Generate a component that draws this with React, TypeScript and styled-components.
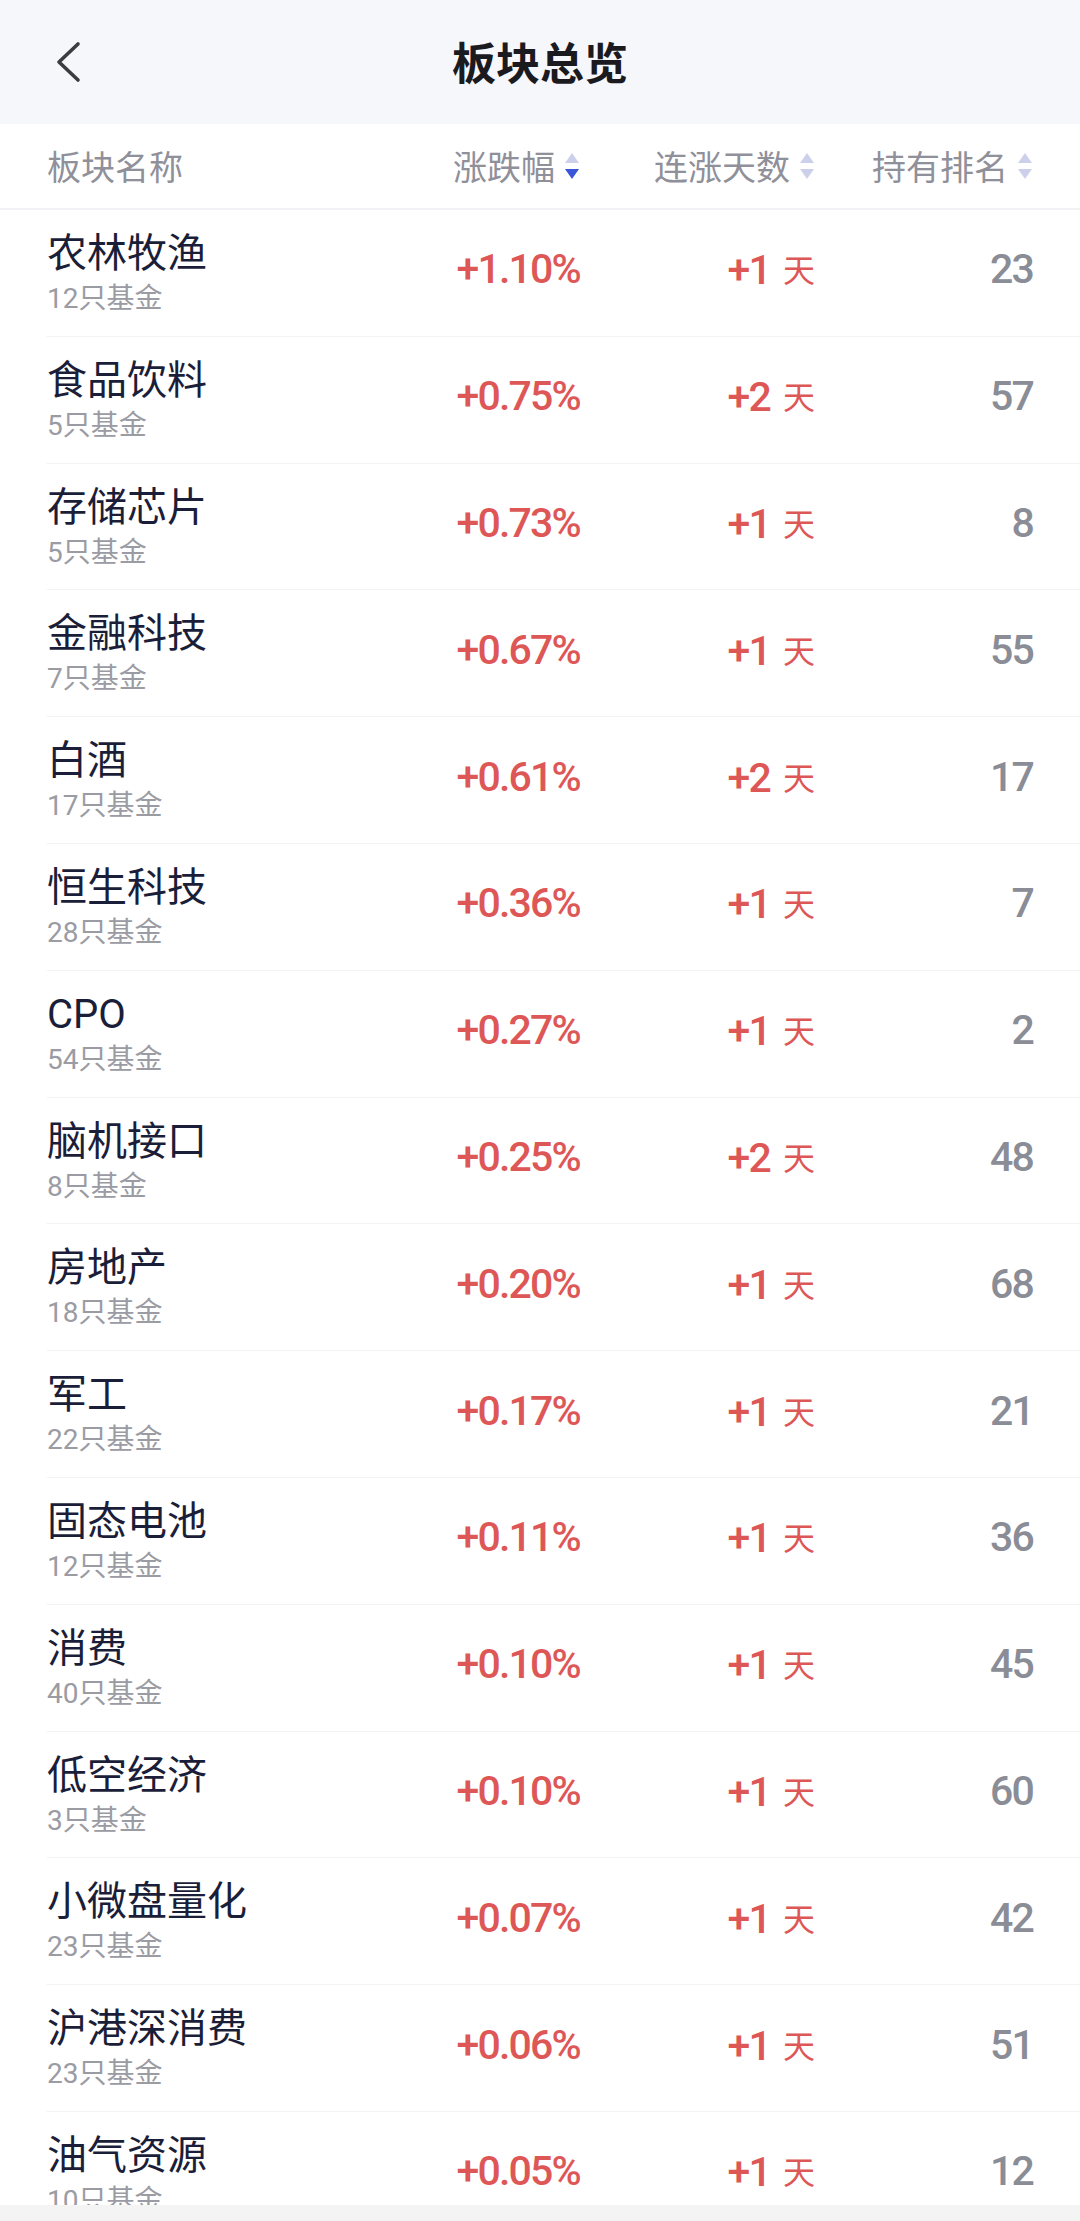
import React from "react";
import styled, { createGlobalStyle } from "styled-components";

const GlobalStyle = createGlobalStyle`
  html, body { margin: 0; padding: 0; background: #ffffff; }
  body { font-family: Roboto, "Noto Sans CJK SC", sans-serif; -webkit-font-smoothing: antialiased; }
  * { box-sizing: border-box; }
`;

type Sector = { name: string; funds: number; pct: string; days: number; rank: number };

const DATA: Sector[] = [
  { name: "农林牧渔", funds: 12, pct: "+1.10%", days: 1, rank: 23 },
  { name: "食品饮料", funds: 5, pct: "+0.75%", days: 2, rank: 57 },
  { name: "存储芯片", funds: 5, pct: "+0.73%", days: 1, rank: 8 },
  { name: "金融科技", funds: 7, pct: "+0.67%", days: 1, rank: 55 },
  { name: "白酒", funds: 17, pct: "+0.61%", days: 2, rank: 17 },
  { name: "恒生科技", funds: 28, pct: "+0.36%", days: 1, rank: 7 },
  { name: "CPO", funds: 54, pct: "+0.27%", days: 1, rank: 2 },
  { name: "脑机接口", funds: 8, pct: "+0.25%", days: 2, rank: 48 },
  { name: "房地产", funds: 18, pct: "+0.20%", days: 1, rank: 68 },
  { name: "军工", funds: 22, pct: "+0.17%", days: 1, rank: 21 },
  { name: "固态电池", funds: 12, pct: "+0.11%", days: 1, rank: 36 },
  { name: "消费", funds: 40, pct: "+0.10%", days: 1, rank: 45 },
  { name: "低空经济", funds: 3, pct: "+0.10%", days: 1, rank: 60 },
  { name: "小微盘量化", funds: 23, pct: "+0.07%", days: 1, rank: 42 },
  { name: "沪港深消费", funds: 23, pct: "+0.06%", days: 1, rank: 51 },
  { name: "油气资源", funds: 10, pct: "+0.05%", days: 1, rank: 12 },
];

const Page = styled.div`
  width: 1080px;
  height: 2221px;
  display: flex;
  flex-direction: column;
  background: #ffffff;
  overflow: hidden;
`;

const TopBar = styled.header`
  flex: 0 0 124px;
  height: 124px;
  background: #f6f7fb;
  display: grid;
  grid-template-columns: 140px 1fr 140px;
  align-items: center;
`;

const BackButton = styled.button`
  border: 0;
  background: transparent;
  padding: 0 0 0 54px;
  height: 124px;
  display: flex;
  align-items: center;
  justify-content: flex-start;
  cursor: pointer;
`;

const Title = styled.h1`
  margin: 0;
  text-align: center;
  font-family: "Noto Sans CJK SC", sans-serif;
  font-size: 44px;
  font-weight: 700;
  color: #1a1a1f;
  line-height: 60px;
  padding-bottom: 2px;
`;

const Grid = styled.div`
  display: grid;
  grid-template-columns: 298px 235px 235px 218px;
`;

const HeadRow = styled(Grid)`
  flex: 0 0 86px;
  height: 86px;
  padding: 0 45px 0 47px;
  align-items: center;
  border-bottom: 2px solid #f1f2f5;
`;

const HeadCell = styled.div<{ $right?: boolean }>`
  display: flex;
  align-items: center;
  justify-content: ${(p) => (p.$right ? "flex-end" : "flex-start")};
  gap: 9px;
  font-family: "Noto Sans CJK SC", sans-serif;
  font-size: 34px;
  color: #8f9099;
  line-height: 40px;
`;

const List = styled.div`
  flex: 1 1 auto;
  overflow: hidden;
  padding-left: 47px;
`;

const Row = styled(Grid)`
  height: 126.8px;
  padding-right: 47px;
  align-items: center;
  border-bottom: 1px solid #f2f3f5;
`;

const NameCell = styled.div`
  align-self: start;
  padding-top: 22px;
  display: flex;
  flex-direction: column;
`;

const Name = styled.div`
  font-family: Roboto, "Noto Sans CJK SC", sans-serif;
  font-size: 40px;
  line-height: 44px;
  color: #1b1e38;
  white-space: nowrap;
`;

const Sub = styled.div`
  margin-top: 5px;
  font-family: Roboto, "Noto Sans CJK SC", sans-serif;
  font-size: 28px;
  line-height: 36px;
  color: #9a9ba3;
`;

const Num = styled.div<{ $tone: "up" | "muted" }>`
  text-align: right;
  padding-bottom: 7px;
  font-family: Roboto, "Noto Sans CJK SC", sans-serif;
  font-size: 41px;
  font-weight: 500;
  letter-spacing: -1.8px;
  line-height: 48px;
  white-space: nowrap;
  color: ${(p) => (p.$tone === "up" ? "#de5757" : "#8a8c96")};
`;

const Unit = styled.span`
  font-family: "Noto Sans CJK SC", sans-serif;
  font-size: 32px;
  font-weight: 400;
  letter-spacing: 0;
  margin-left: 13px;
  vertical-align: 2px;
`;

const BottomBar = styled.div`
  flex: 0 0 16px;
  background: #f4f4f5;
`;

const Chevron = () => (
  <svg width="28" height="42" viewBox="0 0 28 42" fill="none">
    <polyline points="24,3 5,21 24,39" stroke="#3b3b40" strokeWidth="3.6" strokeLinecap="round" strokeLinejoin="round" />
  </svg>
);

const SortIcon = ({ active }: { active?: "down" | "up" }) => (
  <svg width="16" height="32" viewBox="0 0 16 32">
    <path d="M8 3 L15 13 L1 13 Z" fill={active === "up" ? "#3a55d6" : "#cdd0ea"} />
    <path d="M1 19 L15 19 L8 29 Z" fill={active === "down" ? "#3a55d6" : "#cdd0ea"} />
  </svg>
);

export default function App() {
  return (
    <>
      <GlobalStyle />
      <Page>
        <TopBar>
          <BackButton aria-label="返回">
            <Chevron />
          </BackButton>
          <Title>板块总览</Title>
          <div />
        </TopBar>
        <HeadRow>
          <HeadCell>板块名称</HeadCell>
          <HeadCell $right>
            涨跌幅
            <SortIcon active="down" />
          </HeadCell>
          <HeadCell $right>
            连涨天数
            <SortIcon />
          </HeadCell>
          <HeadCell $right>
            持有排名
            <SortIcon />
          </HeadCell>
        </HeadRow>
        <List>
          {DATA.map((s) => (
            <Row key={s.name}>
              <NameCell>
                <Name>{s.name}</Name>
                <Sub>{s.funds}只基金</Sub>
              </NameCell>
              <Num $tone="up">{s.pct}</Num>
              <Num $tone="up">
                +{s.days}
                <Unit>天</Unit>
              </Num>
              <Num $tone="muted">{s.rank}</Num>
            </Row>
          ))}
        </List>
        <BottomBar />
      </Page>
    </>
  );
}
